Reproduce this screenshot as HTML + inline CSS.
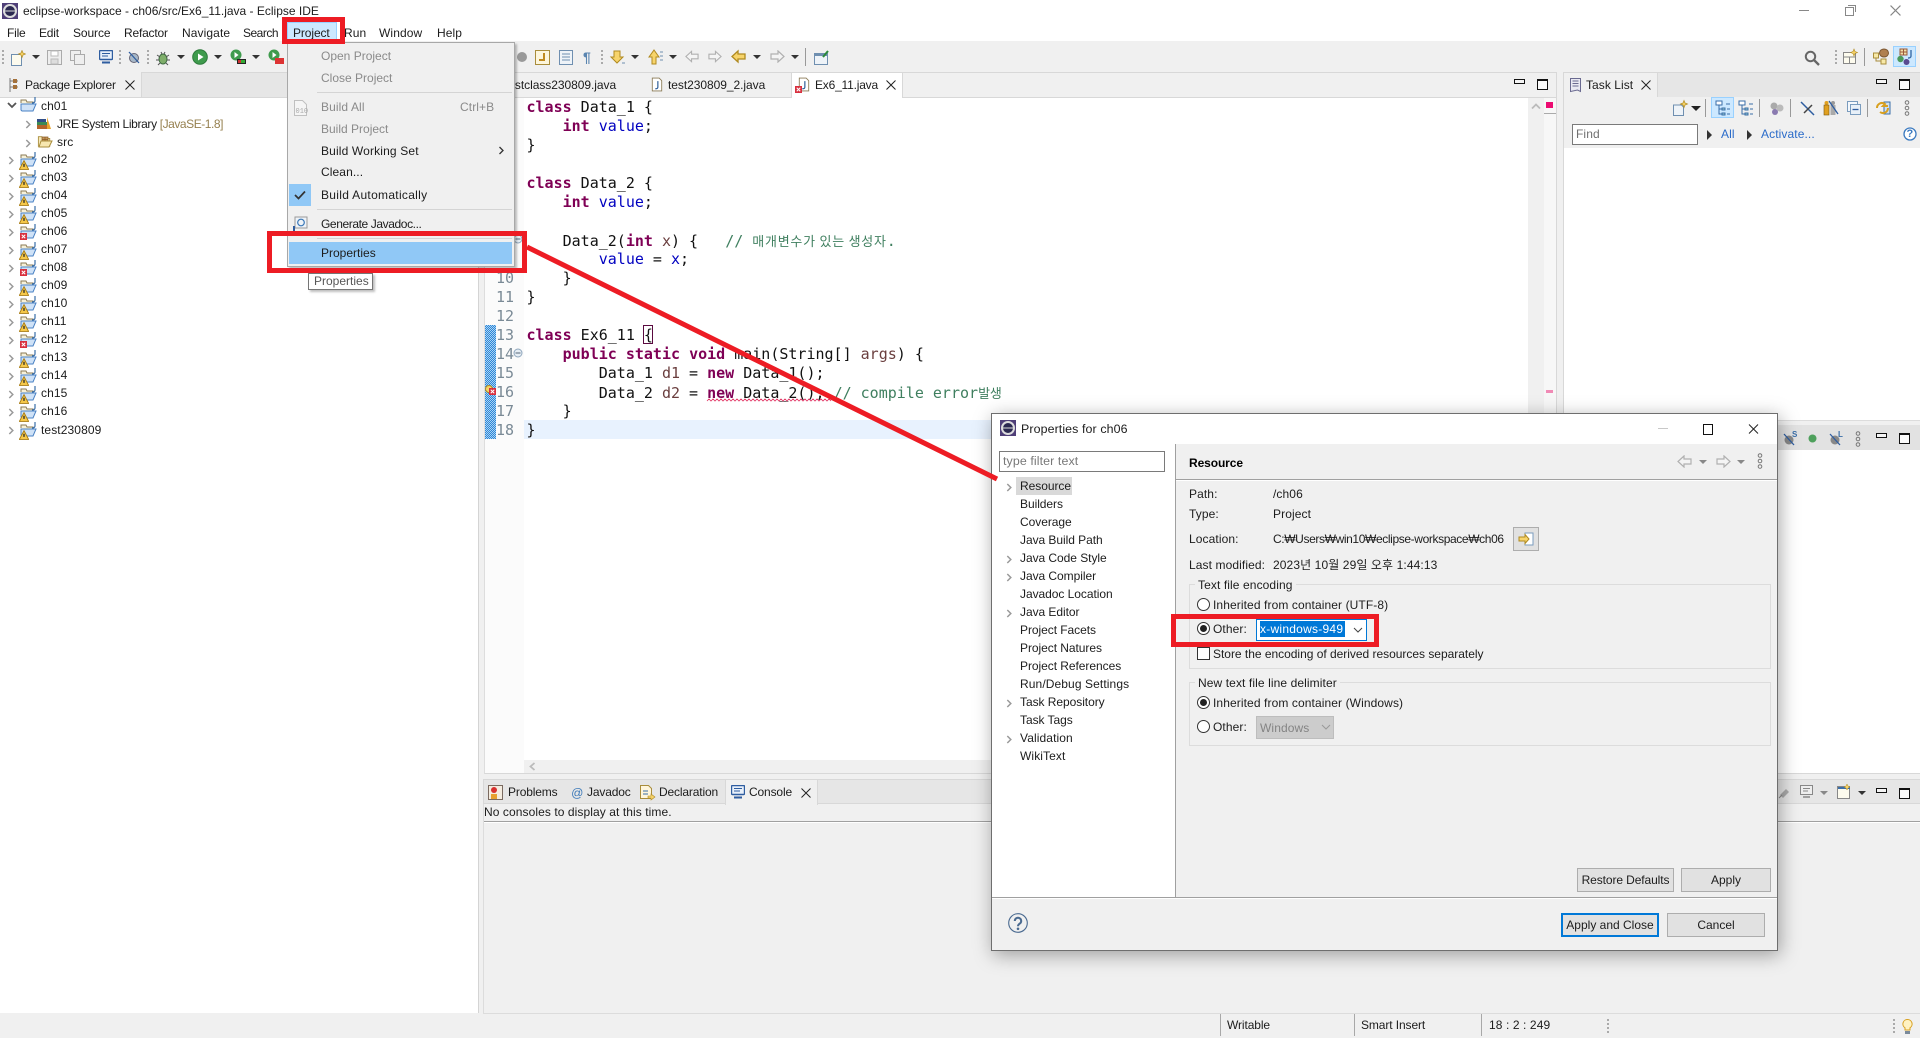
<!DOCTYPE html>
<html><head><meta charset="utf-8"><title>Eclipse</title>
<style>
html,body{margin:0;padding:0;width:1920px;height:1038px;overflow:hidden;background:#f0f0f0}
body{position:relative;font:12px/16px "Liberation Sans","Noto Sans CJK KR",sans-serif;color:#1c1c1c}
.a{position:absolute}
.t{position:absolute;white-space:nowrap;line-height:16px;letter-spacing:.1px}
.i{position:absolute;overflow:visible}
.dis{color:#8a8a8a}
.dd{position:absolute;width:0;height:0;border:4px solid transparent;border-top:4px solid #333;border-bottom:0}
.dg{border-top-color:#888}
.g{position:absolute;width:2px;height:15px;background:repeating-linear-gradient(#aaa 0 2px,transparent 2px 4px)}
.s{position:absolute;width:1px;height:18px;background:#999}
.c{position:absolute;left:526.5px;height:19px;line-height:19px;font:15px/19px "DejaVu Sans Mono","Liberation Mono",monospace;white-space:pre;color:#111}
.k{color:#7f0055;font-weight:bold}.f{color:#0000c0}.l{color:#6a3e3e}.m{color:#3f7f5f}
.ko{font:13px/19px "Noto Sans CJK KR",sans-serif;letter-spacing:.75px}
.ko2{font:13px/19px "Noto Sans CJK KR",sans-serif;letter-spacing:-.2px}
.n{position:absolute;left:490px;width:24px;text-align:right;height:19px;font:15px/19px "DejaVu Sans Mono",monospace;color:#7a8a96}
.mn{position:absolute;width:9px;height:3px;border:1px solid #111;background:#f4f4f4}
.mx{position:absolute;width:9px;height:8px;border:1px solid #111;border-top-width:2px;background:#fafafa}
.r{position:absolute;width:13px;height:13px;border:1px solid #333;border-radius:50%;background:#fff;box-sizing:border-box}
.r.on::after{content:"";position:absolute;left:2px;top:2px;width:7px;height:7px;border-radius:50%;background:#222}
.btn{position:absolute;box-sizing:border-box;border:1px solid #adadad;background:#e1e1e1;height:24px;text-align:center;line-height:22px;white-space:nowrap;letter-spacing:0}
.red{position:absolute;box-sizing:border-box;border:5px solid #ed1c24}
.tree .t{left:41px}
.dt{letter-spacing:-.05px}
.tb{letter-spacing:-.15px}
</style></head><body>
<svg width="0" height="0" style="position:absolute">
<defs>
<symbol id="logo" viewBox="0 0 16 16"><rect width="16" height="16" fill="#4f3f78"/><circle cx="8" cy="8" r="7" fill="#ddd"/><circle cx="8" cy="8" r="5" fill="#2b2950"/><path d="M3 8h10" stroke="#ddd" stroke-width="1"/></symbol>
<symbol id="chev" viewBox="0 0 8 10"><path d="M1.5 1l4 4-4 4" fill="none" stroke="#999" stroke-width="1.7"/></symbol>
<symbol id="pj" viewBox="0 0 17 17"><path d="M1 6V3h5l1 2h6v3" fill="#f6f0d8" stroke="#8a7a55"/><path d="M1 13V7h15l-3 7H2z" fill="#cfe2f7" stroke="#4a82c4"/><path d="M15 0v4q0 2-3 2" fill="none" stroke="#3a6ea8" stroke-width="1.2"/></symbol>
<symbol id="warn" viewBox="0 0 8 8"><path d="M4 .5L7.7 7.5H.3z" fill="#f5c84a" stroke="#a87b10" stroke-width=".7"/><path d="M4 3v2.5" stroke="#222"/></symbol>
<symbol id="err" viewBox="0 0 8 8"><rect width="8" height="8" fill="#d8303f"/><path d="M2 2l4 4M6 2l-4 4" stroke="#fff" stroke-width="1.2"/></symbol>
<symbol id="x" viewBox="0 0 10 10"><path d="M.5.5l9 9M9.5.5l-9 9" stroke="#222" stroke-width="1" fill="none"/></symbol>
<symbol id="jf" viewBox="0 0 14 16"><path d="M1.5.5h8l3 3v12h-11z" fill="#fff" stroke="#8a7a55"/><path d="M8 4v7q0 2-3 2" fill="none" stroke="#2f5f9a" stroke-width="1.4"/></symbol>
<symbol id="mon" viewBox="0 0 14 14"><rect x=".5" y=".5" width="13" height="9" rx="1" fill="#e8f0fa" stroke="#2e5da0" stroke-width="1.4"/><path d="M3 3.5h8M3 6h6" stroke="#2e5da0"/><path d="M3 12.5h8" stroke="#2e5da0" stroke-width="2"/></symbol>
<symbol id="keb" viewBox="0 0 6 16"><circle cx="3" cy="2.5" r="1.8" fill="none" stroke="#777"/><circle cx="3" cy="8" r="1.8" fill="none" stroke="#777"/><circle cx="3" cy="13.5" r="1.8" fill="none" stroke="#777"/></symbol>
<symbol id="back" viewBox="0 0 15 13"><path d="M7 1L1 6.5 7 12V9h7V4H7z" fill="#f4f4f4" stroke="#b0b0b0" stroke-width="1.2"/></symbol>
<symbol id="fwd" viewBox="0 0 15 13"><path d="M8 1l6 5.5L8 12V9H1V4h7z" fill="#f4f4f4" stroke="#b0b0b0" stroke-width="1.2"/></symbol>
<symbol id="tree" viewBox="0 0 16 16"><path d="M1 1h6v4H1z" fill="#fff" stroke="#3a6ea8"/><path d="M4 5v9h3M4 9h3" fill="none" stroke="#3a6ea8"/><path d="M7 8h3v2H7zM7 13h3v2H7z" fill="#9cc" stroke="#3a6ea8"/><path d="M11 4h4M12 9h3M12 14h3" stroke="#3a6ea8"/></symbol>
<symbol id="newt" viewBox="0 0 16 16"><path d="M1.5 4.5h10v11h-10z" fill="#fdfbee" stroke="#6f8fb0"/><path d="M12 .5l1 2.5 2.5 1-2.5 1-1 2.5-1-2.500L8.500 4l2.500-1z" fill="#f7d46b" stroke="#b08a20" stroke-width=".7"/></symbol>
<symbol id="bug" viewBox="0 0 16 16"><ellipse cx="8" cy="9" rx="4" ry="5" fill="#7fae6a" stroke="#3c6a40"/><path d="M2 5l3 2M14 5l-3 2M1 10h3M15 10h-3M3 15l2-2M13 15l-2-2M6 2l1 2M10 2L9 4" stroke="#555"/></symbol>
<symbol id="run" viewBox="0 0 16 16"><circle cx="8" cy="8" r="7.300" fill="#3f9b4d" stroke="#2c7a3a"/><path d="M6 4.500v7l5.500-3.500z" fill="#fff"/></symbol>
<symbol id="ora" viewBox="0 0 16 16"><path d="M1 3h4l1 2h8v9H1z" fill="#f5e9bb" stroke="#a98d3c"/></symbol>
</defs></svg>

<!-- title -->
<div class="a" style="left:0;top:0;width:1920px;height:41px;background:#fff"></div>
<svg class="i" style="left:2px;top:3px" width="16" height="16"><use href="#logo"/></svg>
<div class="t" style="left:23px;top:3px;letter-spacing:0">eclipse-workspace - ch06/src/Ex6_11.java - Eclipse IDE</div>
<div class="a" style="left:1799px;top:10px;width:10px;height:1px;background:#888"></div>
<div class="a" style="left:1845px;top:7px;width:7px;height:7px;border:1px solid #888"></div>
<div class="a" style="left:1848px;top:5px;width:7px;height:1px;background:#888"></div>
<div class="a" style="left:1855px;top:5px;width:1px;height:7px;background:#888"></div>
<svg class="i" style="left:1890px;top:5px" width="11" height="11"><use href="#x" style="opacity:.55"/></svg>

<!-- menu bar -->
<div class="a" style="left:287px;top:22px;width:50px;height:20px;background:#cce8ff;border:1px solid #99d1ff;box-sizing:border-box"></div>
<div class="t" style="left:7px;top:25px;letter-spacing:-.2px">File</div>
<div class="t" style="left:39px;top:25px;letter-spacing:-.2px">Edit</div>
<div class="t" style="left:73px;top:25px;letter-spacing:-.1px">Source</div>
<div class="t" style="left:124px;top:25px;letter-spacing:-.2px">Refactor</div>
<div class="t" style="left:182px;top:25px">Navigate</div>
<div class="t" style="left:243px;top:25px;letter-spacing:-.5px">Search</div>
<div class="t" style="left:293px;top:25px;letter-spacing:-.1px">Project</div>
<div class="t" style="left:344px;top:25px">Run</div>
<div class="t" style="left:379px;top:25px">Window</div>
<div class="t" style="left:437px;top:25px">Help</div>

<!-- toolbar icons -->
<div class="g" style="left:2px;top:50px"></div>
<svg class="i" style="left:10px;top:50px" width="16" height="16"><use href="#newt"/></svg>
<div class="dd" style="left:32px;top:55px"></div>
<svg class="i" style="left:47px;top:50px" width="15" height="15"><rect x=".5" y=".5" width="14" height="14" fill="#eee" stroke="#aaa"/><rect x="4" y="1" width="7" height="5" fill="#fff" stroke="#bbb"/><rect x="4" y="9" width="7" height="5" fill="#ddd" stroke="#bbb"/></svg>
<svg class="i" style="left:70px;top:50px" width="15" height="15"><rect x=".5" y=".5" width="10" height="10" fill="#eee" stroke="#aaa"/><rect x="4.500" y="4.500" width="10" height="10" fill="#eee" stroke="#aaa"/></svg>
<svg class="i" style="left:99px;top:50px" width="14" height="14"><use href="#mon"/></svg>
<div class="g" style="left:119px;top:50px"></div>
<svg class="i" style="left:128px;top:51px" width="12" height="13"><circle cx="6" cy="7" r="4.500" fill="#a8b8c8" stroke="#667"/><path d="M1 1l10 11" stroke="#2e5da0" stroke-width="1.300"/></svg>
<div class="g" style="left:147px;top:50px"></div>
<svg class="i" style="left:155px;top:50px" width="16" height="16"><use href="#bug"/></svg>
<div class="dd" style="left:177px;top:55px"></div>
<svg class="i" style="left:192px;top:49px" width="16" height="16"><use href="#run"/></svg>
<div class="dd" style="left:214px;top:55px"></div>
<svg class="i" style="left:230px;top:49px" width="17" height="16"><circle cx="6" cy="6" r="5.500" fill="#3f9b4d"/><path d="M4.500 3v6l4-3z" fill="#fff"/><rect x="7" y="10" width="9" height="5" fill="#222"/><rect x="8" y="11" width="3" height="3" fill="#c33"/><rect x="11" y="11" width="4" height="3" fill="#3a3"/></svg>
<div class="dd" style="left:252px;top:55px"></div>
<svg class="i" style="left:268px;top:49px" width="17" height="16"><circle cx="6" cy="6" r="5.500" fill="#3f9b4d"/><path d="M4.500 3v6l4-3z" fill="#fff"/><rect x="7" y="9" width="9" height="6" fill="#d33"/></svg>

<svg class="i" style="left:516px;top:50px" width="12" height="14"><circle cx="6" cy="7" r="5" fill="#999"/></svg>
<svg class="i" style="left:535px;top:50px" width="15" height="15"><rect x=".5" y=".5" width="14" height="14" fill="#fdf6dc" stroke="#a98d3c"/><path d="M9 3v7H4" fill="none" stroke="#c08a1f" stroke-width="2"/></svg>
<svg class="i" style="left:559px;top:50px" width="14" height="15"><rect x=".5" y=".5" width="13" height="14" fill="#eef3f8" stroke="#6f8fb0"/><path d="M3 4h8M3 7h8M3 10h8" stroke="#6f8fb0"/></svg>
<div class="t" style="left:583px;top:49px;font-size:14px;font-weight:bold;color:#5a85b0">¶</div>
<div class="g" style="left:601px;top:50px"></div>
<svg class="i" style="left:610px;top:49px" width="15" height="16"><path d="M3 1h6v6h3l-6 6-6-6h3z" transform="translate(1,1)" fill="#f7d46b" stroke="#b08a20"/><path d="M12 14h3" stroke="#6f8fb0"/></svg>
<div class="dd" style="left:631px;top:55px"></div>
<svg class="i" style="left:648px;top:49px" width="15" height="16"><path d="M4 15V8H1l5-7 5 7H8v7z" fill="#f7d46b" stroke="#b08a20"/><path d="M12 3h3M12 7h3M12 11h3" stroke="#6f8fb0"/></svg>
<div class="dd" style="left:669px;top:55px"></div>
<svg class="i" style="left:685px;top:50px" width="14" height="13"><use href="#back"/></svg>
<svg class="i" style="left:708px;top:50px" width="14" height="13"><use href="#fwd"/></svg>
<svg class="i" style="left:731px;top:50px" width="15" height="13"><path d="M7 1L1 6.500 7 12V9h7V4H7z" fill="#f7d46b" stroke="#b08a20" stroke-width="1.300"/></svg>
<div class="dd" style="left:753px;top:55px"></div>
<svg class="i" style="left:770px;top:50px" width="15" height="13"><use href="#fwd"/></svg>
<div class="dd" style="left:791px;top:55px"></div>
<div class="s" style="left:805px;top:48px"></div>
<svg class="i" style="left:814px;top:50px" width="16" height="15"><rect x=".5" y="3.500" width="13" height="11" fill="#eef3f8" stroke="#6f8fb0"/><rect x="1" y="4" width="12" height="2" fill="#6f8fb0"/><path d="M9 7l5-6" stroke="#2c8a3a" stroke-width="2"/></svg>

<svg class="i" style="left:1804px;top:50px" width="16" height="16"><circle cx="6.500" cy="6.500" r="4.700" fill="none" stroke="#666" stroke-width="2"/><path d="M10 10l5 5" stroke="#666" stroke-width="2.300"/></svg>
<div class="g" style="left:1835px;top:50px"></div>
<svg class="i" style="left:1843px;top:49px" width="15" height="16"><rect x=".5" y="3.500" width="12" height="11" fill="#fdfbee" stroke="#888"/><path d="M.5 8h12M6.500 8v6" stroke="#888"/><path d="M11 0l1 2.500 2.500 1-2.500 1-1 2.500-1-2.500-2.500-1 2.500-1z" fill="#f7d46b" stroke="#b08a20" stroke-width=".6"/></svg>
<div class="s" style="left:1864px;top:48px"></div>
<svg class="i" style="left:1873px;top:48px" width="16" height="17"><rect x=".5" y="5" width="5" height="5" fill="#f7e9a8" stroke="#a98d3c"/><rect x="8" y="11" width="5" height="5" fill="#f7e9a8" stroke="#a98d3c"/><path d="M3 10v3h5" fill="none" stroke="#a98d3c"/><ellipse cx="11" cy="5" rx="4.500" ry="4" fill="#b08050" stroke="#7a5530"/></svg>
<div class="a" style="left:1893px;top:46px;width:23px;height:21px;box-sizing:border-box;background:#cce8ff;border:1px solid #99d1ff"></div>
<svg class="i" style="left:1897px;top:49px" width="16" height="16"><rect x="3" y="0" width="7" height="6" fill="#f2dfa7" stroke="#9a5a3a"/><path d="M3 3h7M6.500 0v6" stroke="#9a5a3a"/><circle cx="3.500" cy="10" r="3.200" fill="#4c9a5c"/><circle cx="9.500" cy="13" r="3" fill="#5a4a90"/><path d="M14 1v6q0 2-3 2" fill="none" stroke="#3a6ea8" stroke-width="1.400"/></svg>

<!-- left panel -->
<div class="a" style="left:0;top:72px;width:479px;height:25px;background:#e6e6e6;border-top:1px solid #d8d8d8;box-sizing:border-box"></div>
<div class="a" style="left:0;top:72px;width:142px;height:26px;background:#f0f0f0;border-right:1px solid #d8d8d8;box-sizing:border-box"></div>
<svg class="i" style="left:9px;top:78px" width="10" height="14"><path d="M1 0v14" stroke="#777"/><path d="M1 3h8M1 9h8" stroke="#777"/><rect x="4" y="1" width="4" height="4" fill="#a3703a"/><rect x="4" y="7" width="4" height="4" fill="#a3703a"/></svg>
<div class="t" style="left:25px;top:77px;letter-spacing:-.25px">Package Explorer</div>
<svg class="i" style="left:125px;top:80px" width="10" height="10"><use href="#x"/></svg>
<div class="a" style="left:0;top:97px;width:479px;height:916px;background:#fff;border-right:1px solid #d4d4d4;border-top:1px solid #d8d8d8;box-sizing:border-box"></div>

<!-- tree -->
<div class="tree">
<svg class="i" style="left:7px;top:102px" width="10" height="8"><path d="M1 1l4 4 4-4" fill="none" stroke="#555" stroke-width="1.800"/></svg>
<svg class="i" style="left:20px;top:97px" width="17" height="17"><use href="#pj"/></svg>
<div class="t" style="top:97.500px">ch01</div>
<svg class="i" style="left:25px;top:120px" width="7" height="9"><use href="#chev"/></svg>
<svg class="i" style="left:37px;top:116px" width="15" height="14"><rect x="0" y="9" width="10" height="4" fill="#b3642a"/><rect x="0" y="6" width="10" height="3" fill="#3b8a55"/><rect x="0" y="3" width="9" height="3" fill="#324f88"/><path d="M10 1l4 12h-4z" fill="#e8a32b"/></svg>
<div class="t" style="left:57px;top:115.500px;letter-spacing:-.35px">JRE System Library <span style="color:#96804f;letter-spacing:-.45px">[JavaSE-1.8]</span></div>
<svg class="i" style="left:25px;top:139px" width="7" height="9"><use href="#chev"/></svg>
<svg class="i" style="left:37px;top:134px" width="15" height="14"><use href="#ora"/><path d="M5 3h6v5H5z M8 3v5M5 5.500h6" fill="#c4965a" stroke="#8a5c26" stroke-width=".7"/><path d="M2 13l2-6h11l-3 6z" fill="#f7e7b0" stroke="#a98d3c"/></svg>
<div class="t" style="left:57px;top:134px">src</div>

<svg class="i" style="left:8px;top:156px" width="7" height="9"><use href="#chev"/></svg><svg class="i" style="left:20px;top:152px" width="17" height="17"><use href="#pj"/></svg><svg class="i" style="left:19px;top:160px" width="10" height="10"><use href="#warn"/></svg><div class="t" style="top:151px">ch02</div>
<svg class="i" style="left:8px;top:174px" width="7" height="9"><use href="#chev"/></svg><svg class="i" style="left:20px;top:170px" width="17" height="17"><use href="#pj"/></svg><svg class="i" style="left:19px;top:178px" width="10" height="10"><use href="#warn"/></svg><div class="t" style="top:169px">ch03</div>
<svg class="i" style="left:8px;top:192px" width="7" height="9"><use href="#chev"/></svg><svg class="i" style="left:20px;top:188px" width="17" height="17"><use href="#pj"/></svg><svg class="i" style="left:19px;top:196px" width="10" height="10"><use href="#warn"/></svg><div class="t" style="top:187px">ch04</div>
<svg class="i" style="left:8px;top:210px" width="7" height="9"><use href="#chev"/></svg><svg class="i" style="left:20px;top:206px" width="17" height="17"><use href="#pj"/></svg><svg class="i" style="left:19px;top:214px" width="10" height="10"><use href="#warn"/></svg><div class="t" style="top:205px">ch05</div>
<svg class="i" style="left:8px;top:228px" width="7" height="9"><use href="#chev"/></svg><svg class="i" style="left:20px;top:224px" width="17" height="17"><use href="#pj"/></svg><svg class="i" style="left:20px;top:233px" width="7" height="7"><use href="#err"/></svg><div class="t" style="top:223px">ch06</div>
<svg class="i" style="left:8px;top:246px" width="7" height="9"><use href="#chev"/></svg><svg class="i" style="left:20px;top:242px" width="17" height="17"><use href="#pj"/></svg><svg class="i" style="left:19px;top:250px" width="10" height="10"><use href="#warn"/></svg><div class="t" style="top:241px">ch07</div>
<svg class="i" style="left:8px;top:264px" width="7" height="9"><use href="#chev"/></svg><svg class="i" style="left:20px;top:260px" width="17" height="17"><use href="#pj"/></svg><svg class="i" style="left:20px;top:269px" width="7" height="7"><use href="#err"/></svg><div class="t" style="top:259px">ch08</div>
<svg class="i" style="left:8px;top:282px" width="7" height="9"><use href="#chev"/></svg><svg class="i" style="left:20px;top:278px" width="17" height="17"><use href="#pj"/></svg><svg class="i" style="left:19px;top:286px" width="10" height="10"><use href="#warn"/></svg><div class="t" style="top:277px">ch09</div>
<svg class="i" style="left:8px;top:300px" width="7" height="9"><use href="#chev"/></svg><svg class="i" style="left:20px;top:296px" width="17" height="17"><use href="#pj"/></svg><svg class="i" style="left:19px;top:304px" width="10" height="10"><use href="#warn"/></svg><div class="t" style="top:295px">ch10</div>
<svg class="i" style="left:8px;top:318px" width="7" height="9"><use href="#chev"/></svg><svg class="i" style="left:20px;top:314px" width="17" height="17"><use href="#pj"/></svg><svg class="i" style="left:19px;top:322px" width="10" height="10"><use href="#warn"/></svg><div class="t" style="top:313px">ch11</div>
<svg class="i" style="left:8px;top:336px" width="7" height="9"><use href="#chev"/></svg><svg class="i" style="left:20px;top:332px" width="17" height="17"><use href="#pj"/></svg><svg class="i" style="left:20px;top:341px" width="7" height="7"><use href="#err"/></svg><div class="t" style="top:331px">ch12</div>
<svg class="i" style="left:8px;top:354px" width="7" height="9"><use href="#chev"/></svg><svg class="i" style="left:20px;top:350px" width="17" height="17"><use href="#pj"/></svg><svg class="i" style="left:19px;top:358px" width="10" height="10"><use href="#warn"/></svg><div class="t" style="top:349px">ch13</div>
<svg class="i" style="left:8px;top:372px" width="7" height="9"><use href="#chev"/></svg><svg class="i" style="left:20px;top:368px" width="17" height="17"><use href="#pj"/></svg><svg class="i" style="left:19px;top:376px" width="10" height="10"><use href="#warn"/></svg><div class="t" style="top:367px">ch14</div>
<svg class="i" style="left:8px;top:390px" width="7" height="9"><use href="#chev"/></svg><svg class="i" style="left:20px;top:386px" width="17" height="17"><use href="#pj"/></svg><svg class="i" style="left:19px;top:394px" width="10" height="10"><use href="#warn"/></svg><div class="t" style="top:385px">ch15</div>
<svg class="i" style="left:8px;top:408px" width="7" height="9"><use href="#chev"/></svg><svg class="i" style="left:20px;top:404px" width="17" height="17"><use href="#pj"/></svg><svg class="i" style="left:19px;top:412px" width="10" height="10"><use href="#warn"/></svg><div class="t" style="top:403px">ch16</div>
<svg class="i" style="left:8px;top:426px" width="7" height="9"><use href="#chev"/></svg><svg class="i" style="left:20px;top:422px" width="17" height="17"><use href="#pj"/></svg><svg class="i" style="left:19px;top:430px" width="10" height="10"><use href="#warn"/></svg><div class="t" style="top:421.500px">test230809</div>
</div>

<!-- editor -->
<div class="a" style="left:484px;top:72px;width:1073px;height:26px;background:#f0f0f0;border:1px solid #d8d8d8;border-width:1px 1px 1px 0;box-sizing:border-box"></div>
<div class="t" style="left:505px;top:77px;letter-spacing:-.05px">testclass230809.java</div>
<svg class="i" style="left:651px;top:77px" width="12" height="15"><use href="#jf"/></svg>
<div class="t" style="left:668px;top:77px;letter-spacing:-.05px">test230809_2.java</div>
<div class="a" style="left:791px;top:72px;width:112px;height:26px;background:#fff;border:1px solid #d8d8d8;border-bottom:0;box-sizing:border-box"></div>
<svg class="i" style="left:798px;top:77px" width="12" height="15"><use href="#jf"/></svg>
<svg class="i" style="left:795px;top:86px" width="7" height="7"><use href="#err"/></svg>
<div class="t" style="left:815px;top:77px;letter-spacing:-.2px">Ex6_11.java</div>
<svg class="i" style="left:886px;top:80px" width="10" height="10"><use href="#x"/></svg>
<div class="mn" style="left:1514px;top:79px"></div>
<div class="mx" style="left:1537px;top:79px"></div>

<div class="a" style="left:484px;top:98px;width:1073px;height:676px;background:#fff;border-left:1px solid #ddd;border-right:1px solid #d8d8d8;border-bottom:1px solid #d8d8d8;box-sizing:border-box"></div>
<div class="a" style="left:485px;top:98px;width:39px;height:675px;background:#fbfbfb"></div>
<div class="a" style="left:485px;top:325px;width:11px;height:114px;background:repeating-conic-gradient(#2d86d8 0 25%,#a9d3f3 0 50%) 0 0/2px 2px"></div>
<div class="a" style="left:524px;top:420px;width:1004px;height:19px;background:#e8f2fe"></div>
<div class="a" style="left:524px;top:760px;width:1032px;height:13px;background:#f0f0f0"></div>
<svg class="i" style="left:529px;top:762px" width="7" height="9"><path d="M5.500 1l-4 3.500 4 3.500" fill="none" stroke="#bbb" stroke-width="1.800"/></svg>
<div class="a" style="left:1528px;top:98px;width:16px;height:662px;background:#f0f0f0"></div>
<div class="a" style="left:1544px;top:98px;width:12px;height:675px;background:#f7f7f7"></div>
<div class="a" style="left:1544px;top:113px;width:12px;height:1px;background:#aaa"></div>
<svg class="i" style="left:1531px;top:103px" width="10" height="7"><path d="M1 5.500l4-4 4 4" fill="none" stroke="#bbb" stroke-width="1.800"/></svg>
<div class="a" style="left:1546px;top:102px;width:7px;height:6px;background:#ec0c72"></div>
<div class="a" style="left:1546px;top:390px;width:7px;height:3px;background:#f08ab5"></div>

<div class="n" style="top:250px">9</div>
<div class="n" style="top:269px">10</div>
<div class="n" style="top:288px">11</div>
<div class="n" style="top:307px">12</div>
<div class="n" style="top:326px">13</div>
<div class="n" style="top:345px">14</div>
<div class="n" style="top:364px">15</div>
<div class="n" style="top:383px">16</div>
<div class="n" style="top:402px">17</div>
<div class="n" style="top:421px">18</div>
<svg class="i" style="left:513px;top:348px" width="10" height="10"><circle cx="5" cy="5" r="4" fill="#e6eef5" stroke="#8fa6bc"/><path d="M2.500 5h5" stroke="#567"/></svg>
<svg class="i" style="left:513px;top:234px" width="10" height="10"><circle cx="5" cy="5" r="4" fill="#e6eef5" stroke="#8fa6bc"/><path d="M2.500 5h5" stroke="#567"/></svg>
<svg class="i" style="left:485px;top:385px" width="8" height="8"><circle cx="4" cy="4" r="3.500" fill="#f5d468" stroke="#b08a20"/></svg>
<svg class="i" style="left:489px;top:388px" width="7" height="7"><use href="#err"/></svg>

<div class="c" style="top:98px"><span class="k">class</span> Data_1 {</div>
<div class="c" style="top:117px">    <span class="k">int</span> <span class="f">value</span>;</div>
<div class="c" style="top:136px">}</div>
<div class="c" style="top:174px"><span class="k">class</span> Data_2 {</div>
<div class="c" style="top:193px">    <span class="k">int</span> <span class="f">value</span>;</div>
<div class="c" style="top:231px">    Data_2(<span class="k">int</span> <span class="l">x</span>) {   <span class="m">// <span class="ko">매개변수가 있는 생성자</span>.</span></div>
<div class="c" style="top:250px">        <span class="f">value</span> = <span class="f">x</span>;</div>
<div class="c" style="top:269px">    }</div>
<div class="c" style="top:288px">}</div>
<div class="c" style="top:326px"><span class="k">class</span> Ex6_11 {</div>
<div class="a" style="left:643px;top:325px;width:8px;height:17px;border:1px solid #5a0a40"></div>
<div class="c" style="top:345px">    <span class="k">public</span> <span class="k">static</span> <span class="k">void</span> main(String[] <span class="l">args</span>) {</div>
<div class="c" style="top:364px">        Data_1 <span class="l">d1</span> = <span class="k">new</span> Data_1();</div>
<div class="c" style="top:383px">        Data_2 <span class="l">d2</span> = <span class="k">new</span> Data_2(); <span class="m">// compile error<span class="ko2">발생</span></span></div>
<div class="c" style="top:402px">    }</div>
<div class="c" style="top:421px">}</div>
<svg class="i" style="left:707px;top:398px" width="110" height="4"><path d="M0 3l2-2 2 2 2-2 2 2 2-2 2 2 2-2 2 2 2-2 2 2 2-2 2 2 2-2 2 2 2-2 2 2 2-2 2 2 2-2 2 2 2-2 2 2 2-2 2 2 2-2 2 2 2-2 2 2 2-2 2 2 2-2 2 2 2-2 2 2 2-2 2 2 2-2 2 2 2-2 2 2 2-2 2 2 2-2 2 2 2-2 2 2 2-2 2 2 2-2 2 2 2-2 2 2 2-2 2 2 2-2 2 2 2-2 2 2 2-2 2 2 2-2 2 2" fill="none" stroke="#e03060" stroke-width=".8"/></svg>

<!-- task list -->
<div class="a" style="left:1563px;top:72px;width:357px;height:25px;background:#e6e6e6;border:1px solid #d8d8d8;border-width:1px 0 0 1px;box-sizing:border-box"></div>
<div class="a" style="left:1563px;top:72px;width:95px;height:26px;background:#f0f0f0;border:1px solid #d8d8d8;border-bottom:0;box-sizing:border-box"></div>
<svg class="i" style="left:1570px;top:78px" width="11" height="15"><path d="M.5.500h10v13l-3-1.500-7 1.500z" fill="#e8e8f2" stroke="#6a6a90"/><path d="M2.500 3h6M2.500 5.500h6M2.500 8h6" stroke="#6a6a90"/></svg>
<div class="t" style="left:1586px;top:77px;letter-spacing:.05px">Task List</div>
<svg class="i" style="left:1641px;top:80px" width="10" height="10"><use href="#x"/></svg>
<div class="mn" style="left:1876px;top:79px"></div>
<div class="mx" style="left:1899px;top:79px"></div>
<div class="a" style="left:1563px;top:97px;width:357px;height:323px;background:#fff;border-left:1px solid #d8d8d8;box-sizing:border-box"></div>
<div class="a" style="left:1564px;top:97px;width:356px;height:51px;background:#f0f0f0"></div>
<svg class="i" style="left:1672px;top:100px" width="16" height="16"><path d="M1.500 5h8l2 2v8.500h-10z" fill="#eef3f8" stroke="#6f8fb0"/><path d="M12 .5l1 2.500 2.500 1-2.500 1-1 2.500-1-2.500L8.500 4l2.500-1z" fill="#f7d46b" stroke="#b08a20" stroke-width=".7"/></svg>
<div class="dd" style="left:1691px;top:106px;border-width:5px;border-top-width:5px;border-bottom:0;border-top-color:#222"></div>
<div class="s" style="left:1705px;top:99px"></div>
<div class="a" style="left:1711px;top:97px;width:23px;height:21px;background:#cce8ff;border:1px solid #99d1ff;box-sizing:border-box"></div>
<svg class="i" style="left:1715px;top:100px" width="16" height="16"><use href="#tree"/></svg>
<svg class="i" style="left:1738px;top:100px" width="16" height="16"><use href="#tree"/></svg>
<div class="s" style="left:1759px;top:99px"></div>
<svg class="i" style="left:1770px;top:102px" width="14" height="13"><circle cx="4" cy="4" r="3.500" fill="#aaa"/><circle cx="10" cy="6" r="3.500" fill="#bbb"/><circle cx="5" cy="10" r="3" fill="#8a7ab0"/></svg>
<div class="s" style="left:1790px;top:99px"></div>
<svg class="i" style="left:1800px;top:101px" width="15" height="15"><path d="M1 1l13 13" stroke="#2e5da0" stroke-width="1.500"/><path d="M4 12l8-8" stroke="#444" stroke-width="1.500"/></svg>
<svg class="i" style="left:1822px;top:100px" width="17" height="16"><circle cx="4.500" cy="3" r="2" fill="#e0a020"/><rect x="2" y="5" width="5" height="10" fill="#e0a020" stroke="#7a5510" stroke-width=".6"/><circle cx="11" cy="3" r="2" fill="#999"/><rect x="8.500" y="5" width="5" height="10" fill="#aaa"/><path d="M7 1l9 13" stroke="#2e5da0" stroke-width="1.300"/></svg>
<svg class="i" style="left:1847px;top:101px" width="14" height="14"><rect x=".5" y=".5" width="10" height="10" fill="#f4f8fc" stroke="#7a9cbe"/><rect x="3.500" y="3.500" width="10" height="10" fill="#e8f0f8" stroke="#7a9cbe"/><path d="M5.500 8.500h6" stroke="#2e5da0" stroke-width="1.300"/></svg>
<div class="s" style="left:1867px;top:99px"></div>
<svg class="i" style="left:1876px;top:101px" width="15" height="14"><rect x="8" y="1" width="6" height="12" fill="#cfe0f2" stroke="#3a6ea8"/><path d="M1 7a5 5 0 0 1 8-4l-2 2h5M12 7a5 5 0 0 1-8 4" fill="none" stroke="#d8a020" stroke-width="2"/></svg>
<svg class="i" style="left:1904px;top:100px" width="6" height="16"><use href="#keb"/></svg>
<div class="a" style="left:1572px;top:124px;width:126px;height:21px;background:#fff;border:1px solid #7a7a7a;box-sizing:border-box"></div>
<div class="t" style="left:1576px;top:126px;color:#707070">Find</div>
<div class="a" style="left:1707px;top:130px;border:5px solid transparent;border-left:5px solid #333;border-right:0"></div>
<div class="t" style="left:1721px;top:126px;color:#2a6bc9">All</div>
<div class="a" style="left:1747px;top:130px;border:5px solid transparent;border-left:5px solid #333;border-right:0"></div>
<div class="t" style="left:1761px;top:126px;color:#2a6bc9">Activate...</div>
<svg class="i" style="left:1903px;top:127px" width="14" height="14"><circle cx="7" cy="7" r="6" fill="#fff" stroke="#3b7ac0" stroke-width="1.300"/></svg>
<div class="t" style="left:1906.500px;top:126px;font-weight:bold;color:#3b7ac0;font-size:11px">?</div>

<!-- outline -->
<div class="a" style="left:1563px;top:420px;width:357px;height:5px;background:#f0f0f0;border-top:1px solid #dcdcdc;box-sizing:border-box"></div>
<div class="a" style="left:1563px;top:425px;width:357px;height:25px;background:#e2e2e2;border-left:1px solid #d8d8d8;box-sizing:border-box"></div>
<div class="a" style="left:1563px;top:450px;width:357px;height:324px;background:#fff;border-left:1px solid #d8d8d8;border-bottom:1px solid #d8d8d8;box-sizing:border-box"></div>
<svg class="i" style="left:1783px;top:431px" width="14" height="15"><circle cx="6" cy="9" r="4.500" fill="#888"/><path d="M1 3l10 11" stroke="#2e5da0" stroke-width="1.300"/><text x="9" y="6" font-size="8" font-weight="bold" fill="#3a6ea8" font-family="Liberation Sans">S</text></svg>
<svg class="i" style="left:1808px;top:434px" width="9" height="9"><circle cx="4.500" cy="4.500" r="4" fill="#4ea05c"/></svg>
<svg class="i" style="left:1829px;top:431px" width="14" height="15"><circle cx="6" cy="9" r="4.500" fill="#888"/><path d="M1 3l10 11" stroke="#2e5da0" stroke-width="1.300"/><text x="9" y="6" font-size="8" font-weight="bold" fill="#3a6ea8" font-family="Liberation Sans">L</text></svg>
<svg class="i" style="left:1855px;top:431px" width="6" height="16"><use href="#keb"/></svg>
<div class="mn" style="left:1876px;top:433px"></div>
<div class="mx" style="left:1899px;top:433px"></div>

<!-- console -->
<div class="a" style="left:483px;top:779px;width:1437px;height:25px;background:#e6e6e6;border:1px solid #d8d8d8;border-width:1px 0 1px 1px;box-sizing:border-box"></div>
<div class="a" style="left:483px;top:804px;width:1437px;height:210px;border:1px solid #dcdcdc;border-top:0;border-right:0;background:#f0f0f0;box-sizing:border-box"></div>
<div class="a" style="left:484px;top:821px;width:1436px;height:1px;background:#a0a0a0"></div>
<div class="a" style="left:484px;top:822px;width:1436px;height:1px;background:#fff"></div>
<svg class="i" style="left:488px;top:785px" width="15" height="15"><rect x=".5" y=".5" width="14" height="14" fill="#f4ece0" stroke="#7a6a60"/><circle cx="6" cy="5" r="3" fill="#d8302f"/><rect x="3" y="9" width="6" height="5" fill="#e8a030"/></svg>
<div class="t tb" style="left:508px;top:784px">Problems</div>
<div class="t" style="left:571px;top:785px;color:#3a78b8;font-style:italic">@</div>
<div class="t tb" style="left:587px;top:784px">Javadoc</div>
<svg class="i" style="left:640px;top:785px" width="15" height="16"><path d="M.5.500h8l3 3v10h-11z" fill="#fff6dc" stroke="#a98d3c"/><path d="M3 6h5M3 9h5" stroke="#3a6ea8"/><path d="M8 11h3V9l4 3-4 3v-2H8z" fill="#f7d46b" stroke="#b08a20" stroke-width=".6"/></svg>
<div class="t tb" style="left:659px;top:784px">Declaration</div>
<div class="a" style="left:725px;top:779px;width:93px;height:26px;background:#f0f0f0;border:1px solid #d8d8d8;border-bottom:0;box-sizing:border-box"></div>
<svg class="i" style="left:731px;top:785px" width="14" height="14"><use href="#mon"/></svg>
<div class="t tb" style="left:749px;top:784px">Console</div>
<svg class="i" style="left:801px;top:788px" width="10" height="10"><use href="#x"/></svg>
<div class="t" style="left:484px;top:804px;letter-spacing:.08px">No consoles to display at this time.</div>
<svg class="i" style="left:1778px;top:785px" width="14" height="14"><path d="M2 10l6-6 3 3-6 6z" fill="#aaa"/><path d="M1 13l3-3" stroke="#888"/></svg>
<svg class="i" style="left:1800px;top:785px" width="13" height="13"><rect x=".5" y=".5" width="12" height="9" fill="#eee" stroke="#888"/><path d="M3 3.500h7M3 6h5" stroke="#888"/><path d="M3 12h7" stroke="#888" stroke-width="1.500"/></svg>
<div class="dd dg" style="left:1820px;top:791px"></div>
<svg class="i" style="left:1837px;top:784px" width="14" height="15"><rect x=".5" y="2.500" width="12" height="12" fill="#fdfbee" stroke="#888"/><path d="M1 4h12" stroke="#3a6ea8" stroke-width="2"/><path d="M10 0l1 2 2 1-2 1-1 2-1-2-2-1 2-1z" fill="#f7d46b" stroke="#b08a20" stroke-width=".5"/></svg>
<div class="dd" style="left:1858px;top:791px"></div>
<div class="mn" style="left:1876px;top:788px"></div>
<div class="mx" style="left:1899px;top:788px"></div>

<!-- status bar -->
<div class="a" style="left:1220px;top:1014px;width:1px;height:22px;background:#a8a8a8"></div>
<div class="a" style="left:1354px;top:1014px;width:1px;height:22px;background:#a8a8a8"></div>
<div class="a" style="left:1481px;top:1014px;width:1px;height:22px;background:#a8a8a8"></div>
<div class="t" style="left:1227px;top:1017px;letter-spacing:-.1px">Writable</div>
<div class="t" style="left:1361px;top:1017px;letter-spacing:-.1px">Smart Insert</div>
<div class="t" style="left:1489px;top:1017px">18 : 2 : 249</div>
<div class="g" style="left:1607px;top:1019px"></div>
<div class="g" style="left:1893px;top:1019px"></div>
<svg class="i" style="left:1902px;top:1019px" width="11" height="17"><path d="M5.500.5a4.500 4.500 0 0 0-2.500 8.300V11h5V8.800A4.500 4.500 0 0 0 5.500.5z" fill="#fff2c2" stroke="#d8a020"/><rect x="3" y="12" width="5" height="3" fill="#7a8a9a"/></svg>

<!-- project menu -->
<div class="a" style="left:287px;top:42px;width:228px;height:225px;background:#f0f0f0;border:1px solid #a8a8a8;box-shadow:2px 2px 2px rgba(0,0,0,.25);box-sizing:border-box"></div>
<div class="t dis" style="left:321px;top:48px;letter-spacing:0">Open Project</div>
<div class="t dis" style="left:321px;top:69.500px;letter-spacing:0">Close Project</div>
<div class="a" style="left:317px;top:92px;width:195px;height:1px;background:#d4d4d4"></div>
<svg class="i" style="left:294px;top:100px" width="13" height="16"><path d="M.5.500h8l4 4v11H.5z" fill="#f5f5f5" stroke="#c0c0c0"/><text x="1.500" y="13" font-size="7" fill="#aaa" font-family="Liberation Mono">010</text></svg>
<div class="t dis" style="left:321px;top:98.500px">Build All</div>
<div class="t dis" style="left:460px;top:98.500px">Ctrl+B</div>
<div class="t dis" style="left:321px;top:120.500px;letter-spacing:0">Build Project</div>
<div class="t" style="left:321px;top:142.500px;letter-spacing:.15px">Build Working Set</div>
<svg class="i" style="left:498px;top:146px" width="7" height="9"><path d="M1.500 1l3.500 3.500-3.500 3.500" fill="none" stroke="#333" stroke-width="1.300"/></svg>
<div class="t" style="left:321px;top:164px">Clean...</div>
<div class="a" style="left:289px;top:184px;width:22px;height:22px;background:#90c8f6"></div>
<svg class="i" style="left:294px;top:190px" width="12" height="10"><path d="M1 5l3.500 3.500L11 1.500" fill="none" stroke="#333" stroke-width="1.700"/></svg>
<div class="t" style="left:321px;top:186.500px;letter-spacing:.3px">Build Automatically</div>
<div class="a" style="left:317px;top:209px;width:195px;height:1px;background:#d4d4d4"></div>
<svg class="i" style="left:293px;top:216px" width="15" height="16"><rect x="2" y="1" width="12" height="11" fill="#eef3f8" stroke="#9a9a9a"/><circle cx="8" cy="6.500" r="3.300" fill="none" stroke="#3a78b8" stroke-width="1.200"/><path d="M1 10v6" stroke="#2e5da0" stroke-width="2"/></svg>
<div class="t" style="left:321px;top:215.500px;letter-spacing:-.4px">Generate Javadoc...</div>
<div class="a" style="left:317px;top:238px;width:195px;height:1px;background:#d4d4d4"></div>
<div class="a" style="left:289px;top:242px;width:223px;height:22px;background:#90c8f6"></div>
<div class="t" style="left:321px;top:245px;letter-spacing:0">Properties</div>

<!-- tooltip -->
<div class="a" style="left:308px;top:273px;width:65px;height:17px;background:#fff;border:1px solid #767676;box-sizing:border-box;box-shadow:2px 2px 2px rgba(0,0,0,.25)"></div>
<div class="t" style="left:314px;top:273px;color:#575757;letter-spacing:0">Properties</div>

<!-- dialog -->
<div class="a" style="left:991px;top:413px;width:787px;height:538px;background:#fff;border:1px solid #6e6e6e;box-sizing:border-box;box-shadow:2px 4px 18px rgba(0,0,0,.35)"></div>
<svg class="i" style="left:1000px;top:420px" width="16" height="16"><use href="#logo"/></svg>
<div class="t" style="left:1021px;top:421px;font-size:12.400px">Properties for ch06</div>
<div class="a" style="left:1658px;top:428px;width:10px;height:1px;background:#c8c8c8"></div>
<div class="a" style="left:1703px;top:424px;width:8px;height:9px;border:1px solid #111"></div>
<svg class="i" style="left:1748px;top:424px" width="11" height="10"><use href="#x"/></svg>

<div class="a" style="left:999px;top:451px;width:166px;height:21px;background:#fff;border:1px solid #7a7a7a;box-sizing:border-box"></div>
<div class="t" style="left:1003px;top:453px;color:#787878;font-size:12.400px">type filter text</div>
<div class="a" style="left:1016px;top:477px;width:56px;height:18px;background:#d9d9d9"></div>
<svg class="i" style="left:1006px;top:483px" width="7" height="9"><use href="#chev"/></svg>
<div class="t dt" style="left:1020px;top:478px">Resource</div>
<div class="t dt" style="left:1020px;top:496px">Builders</div>
<div class="t dt" style="left:1020px;top:514px">Coverage</div>
<div class="t dt" style="left:1020px;top:532px">Java Build Path</div>
<svg class="i" style="left:1006px;top:555px" width="7" height="9"><use href="#chev"/></svg>
<div class="t dt" style="left:1020px;top:550px">Java Code Style</div>
<svg class="i" style="left:1006px;top:573px" width="7" height="9"><use href="#chev"/></svg>
<div class="t dt" style="left:1020px;top:568px">Java Compiler</div>
<div class="t dt" style="left:1020px;top:586px">Javadoc Location</div>
<svg class="i" style="left:1006px;top:609px" width="7" height="9"><use href="#chev"/></svg>
<div class="t dt" style="left:1020px;top:604px">Java Editor</div>
<div class="t dt" style="left:1020px;top:622px">Project Facets</div>
<div class="t dt" style="left:1020px;top:640px">Project Natures</div>
<div class="t dt" style="left:1020px;top:658px">Project References</div>
<div class="t" style="left:1020px;top:676px">Run/Debug Settings</div>
<svg class="i" style="left:1006px;top:699px" width="7" height="9"><use href="#chev"/></svg>
<div class="t dt" style="left:1020px;top:694px">Task Repository</div>
<div class="t dt" style="left:1020px;top:712px">Task Tags</div>
<svg class="i" style="left:1006px;top:735px" width="7" height="9"><use href="#chev"/></svg>
<div class="t" style="left:1020px;top:730px">Validation</div>
<div class="t" style="left:1020px;top:748px">WikiText</div>

<div class="a" style="left:1175px;top:444px;width:602px;height:453px;background:#f0f0f0;border-left:1px solid #a0a0a0;box-sizing:border-box"></div>
<div class="t" style="left:1189px;top:455px;font-weight:bold;color:#000;letter-spacing:-.1px">Resource</div>
<div class="a" style="left:1176px;top:479px;width:601px;height:1px;background:#a0a0a0"></div>
<div class="a" style="left:1176px;top:480px;width:601px;height:1px;background:#fff"></div>
<svg class="i" style="left:1677px;top:455px" width="15" height="13"><use href="#back"/></svg>
<div class="dd dg" style="left:1699px;top:460px"></div>
<svg class="i" style="left:1716px;top:455px" width="15" height="13"><use href="#fwd"/></svg>
<div class="dd dg" style="left:1737px;top:460px"></div>
<svg class="i" style="left:1757px;top:453px" width="6" height="16"><use href="#keb"/></svg>

<div class="t" style="left:1189px;top:485.500px">Path:</div>
<div class="t" style="left:1273px;top:485.500px">/ch06</div>
<div class="t" style="left:1189px;top:505.500px">Type:</div>
<div class="t" style="left:1273px;top:505.500px">Project</div>
<div class="t" style="left:1189px;top:530.500px">Location:</div>
<div class="t" style="left:1273px;top:530.500px;letter-spacing:-.38px">C:₩Users₩win10₩eclipse-workspace₩ch06</div>
<div class="a" style="left:1513px;top:527px;width:26px;height:24px;background:#e1e1e1;border:1px solid #adadad;box-sizing:border-box"></div>
<svg class="i" style="left:1518px;top:532px" width="16" height="14"><rect x="7" y="1" width="8" height="12" fill="#fff" stroke="#7a9cbe"/><path d="M1 5h6V2.500L11 7l-4 4.500V9H1z" fill="#f7d46b" stroke="#b08a20"/></svg>
<div class="t" style="left:1189px;top:556.500px">Last modified:</div>
<div class="t" style="left:1273px;top:556.500px">2023년 10월 29일 오후 1:44:13</div>

<div class="a" style="left:1189px;top:584px;width:582px;height:85px;border:1px solid #dcdcdc;box-sizing:border-box"></div>
<div class="t" style="left:1195px;top:577px;background:#f0f0f0;padding:0 3px">Text file encoding</div>
<div class="r" style="left:1197px;top:598px"></div>
<div class="t" style="left:1213px;top:596.500px">Inherited from container (UTF-8)</div>
<div class="r on" style="left:1197px;top:622px"></div>
<div class="t" style="left:1213px;top:620.500px">Other:</div>
<div class="a" style="left:1256px;top:619px;width:111px;height:22px;background:#fff;border:1px solid #0078d7;box-sizing:border-box"></div>
<div class="t" style="left:1260px;top:621px;width:85px;height:16px;background:#0078d7;color:#fff;letter-spacing:.25px">x-windows-949</div>
<svg class="i" style="left:1353px;top:627px" width="10" height="7"><path d="M1 1l4 4 4-4" fill="none" stroke="#444"/></svg>
<div class="a" style="left:1197px;top:647px;width:13px;height:13px;background:#fff;border:1px solid #333;box-sizing:border-box"></div>
<div class="t" style="left:1213px;top:645.500px;letter-spacing:-.02px">Store the encoding of derived resources separately</div>

<div class="a" style="left:1189px;top:682px;width:582px;height:64px;border:1px solid #dcdcdc;box-sizing:border-box"></div>
<div class="t" style="left:1195px;top:675px;background:#f0f0f0;padding:0 3px">New text file line delimiter</div>
<div class="r on" style="left:1197px;top:696px"></div>
<div class="t" style="left:1213px;top:694.500px">Inherited from container (Windows)</div>
<div class="r" style="left:1197px;top:720px"></div>
<div class="t" style="left:1213px;top:718.500px">Other:</div>
<div class="a" style="left:1256px;top:716px;width:78px;height:23px;background:#cccccc;border:1px solid #bdbdbd;box-sizing:border-box"></div>
<div class="t" style="left:1260px;top:719.500px;color:#848484">Windows</div>
<svg class="i" style="left:1321px;top:724px" width="10" height="7"><path d="M1 1l4 4 4-4" fill="none" stroke="#999"/></svg>

<div class="btn" style="left:1577px;top:868px;width:97px;letter-spacing:-.1px">Restore Defaults</div>
<div class="btn" style="left:1681px;top:868px;width:90px">Apply</div>

<div class="a" style="left:992px;top:897px;width:785px;height:53px;background:#f0f0f0;border-top:1px solid #a0a0a0;box-sizing:border-box"></div>
<div class="a" style="left:992px;top:898px;width:785px;height:1px;background:#fff"></div>
<svg class="i" style="left:1008px;top:913px" width="20" height="20"><circle cx="10" cy="10" r="9.300" fill="none" stroke="#4a6a90" stroke-width="1.100"/><path d="M6.800 8a3.200 3.200 0 1 1 5 2.600c-1.200.8-1.800 1.400-1.800 2.600" fill="none" stroke="#4a6a90" stroke-width="2"/><circle cx="10" cy="15.800" r="1.300" fill="#4a6a90"/></svg>
<div class="btn" style="left:1561px;top:913px;width:98px;border:2px solid #0078d7;line-height:20px">Apply and Close</div>
<div class="btn" style="left:1667px;top:913px;width:98px">Cancel</div>

<!-- annotations -->
<svg class="i" style="left:0;top:0" width="1920" height="1038"><path d="M527 247L997 479" stroke="#ed1c24" stroke-width="5" fill="none"/></svg>
<div class="red" style="left:282px;top:17px;width:63px;height:27px"></div>
<div class="red" style="left:267px;top:231px;width:260px;height:42px"></div>
<div class="red" style="left:1171px;top:614px;width:208px;height:33px"></div>
</body></html>
